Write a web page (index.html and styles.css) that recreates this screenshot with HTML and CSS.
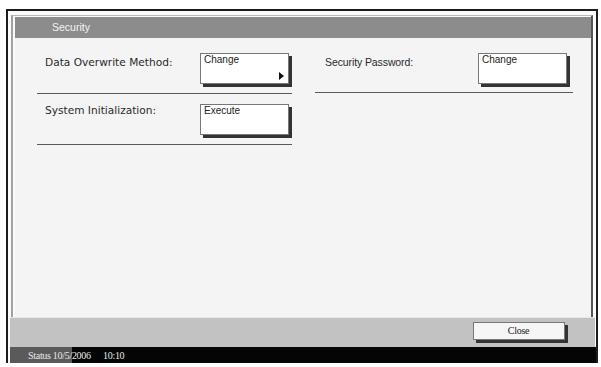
FILE: index.html
```html
<!DOCTYPE html>
<html lang="en">
<head>
    <meta charset="UTF-8">
    <title>Security</title>
    <link rel="stylesheet" href="styles.css">
</head>
<body>
    <div class="frame">
      <div class="window">
        <div class="title-bar">Security</div>
        <div class="content">
          <div class="column">
            <div class="row">
              <span class="label">Data Overwrite Method:</span>
              <div class="key">
                <span>Change</span>
                <svg class="arrow" width="5" height="8" viewBox="0 0 5 8"><path d="M0 0 L5 4 L0 8 Z" fill="#111"/></svg>
              </div>
            </div>
            <div class="row">
              <span class="label">System Initialization:</span>
              <div class="key"><span>Execute</span></div>
            </div>
          </div>
          <div class="column column-right">
            <div class="row">
              <span class="label">Security Password:</span>
              <div class="key"><span>Change</span></div>
            </div>
          </div>
        </div>
      </div>
      <div class="footer">
        <div class="key key-close">Close</div>
      </div>
      <div class="status">
        <span class="status-tab">Status 10/5/2006</span>
        <span class="status-time">10:10</span>
      </div>
    </div>
</body>
</html>
```

FILE: styles.css
```css
body {
  margin: 0;
  background: #ffffff;
  font-family: "Liberation Sans", Arial, sans-serif;
  color: #222;
}

.frame {
  margin: 9px 0 0 6px;
  width: 592px;
  height: 354px;
  box-sizing: border-box;
  border: 2px solid #1c1c1c;
  border-bottom: none;
  padding: 4px 0 0 0;
  background: #fbfbfb;
  display: flex;
  flex-direction: column;
}

/* main window */
.window {
  flex: 1;
  margin: 0 3px 0 3px;
  border-left: 2px solid #a2a2a2;
  border-top: 1px solid #b8b8b8;
  border-right: 2px solid #555;
  display: flex;
  flex-direction: column;
  min-height: 0;
}

.title-bar {
  margin: 1px 0 0 2px;
  height: 21px;
  background: #8c8c8c;
  color: #f4f4f4;
  font-size: 10.5px;
  line-height: 21px;
  padding-left: 37px;
}

.content {
  flex: 1;
  margin-left: 2px;
  background: #f4f4f4;
  display: flex;
  padding: 15px 0 0 22px;
  gap: 23px;
}

.column {
  width: 255px;
  display: flex;
  flex-direction: column;
}
.column-right {
  width: 258px;
}
.column-right .row {
  padding-left: 10px;
  padding-right: 3px;
  padding-bottom: 8px;
}

.row {
  display: flex;
  justify-content: space-between;
  align-items: flex-start;
  padding: 0 0 9px 8px;
  border-bottom: 1px solid #5a5a5a;
}
.row + .row {
  padding-top: 10px;
}

.label {
  font-family: "DejaVu Sans", Verdana, sans-serif;
  font-size: 10.6px;
  color: #2a2a2a;
  padding-top: 3px;
}
.row + .row .label {
  padding-top: 0;
}
.column-right .label {
  font-family: "Liberation Sans", Arial, sans-serif;
  font-size: 10.5px;
  letter-spacing: -0.1px;
}

/* buttons */
.key {
  width: 89px;
  height: 31px;
  margin-right: 3px;
  box-sizing: border-box;
  background: #fff;
  border: 1px solid #777;
  box-shadow: 3px 3px 0 #333;
  padding: 0 4px 0 3px;
  font-size: 10px;
  line-height: 12px;
  display: flex;
  flex-direction: column;
}
.arrow {
  align-self: flex-end;
  margin-top: 6px;
}

.footer {
  height: 30px;
  margin: 0 1px 0 2px;
  background: #c2c2c2;
  border-top: 1px solid #e6e6e6;
  box-sizing: border-box;
  display: flex;
  justify-content: flex-end;
  padding: 4px 30px 0 0;
}
.key-close {
  width: 92px;
  height: 18px;
  margin-right: 0;
  align-items: center;
  justify-content: center;
  line-height: 16px;
  background: #f6f6f6;
  font-family: "Liberation Serif", "Times New Roman", serif;
  font-size: 10px;
  letter-spacing: -0.3px;
}

.status {
  height: 16px;
  margin-left: 2px;
  background: #050505;
  display: flex;
  align-items: center;
  font-family: "Liberation Serif", "Times New Roman", serif;
  font-size: 10px;
  color: #e8e8e8;
  letter-spacing: -0.3px;
}
.status-tab {
  align-self: stretch;
  display: flex;
  align-items: center;
  background: #5a5a5a;
  padding-left: 18px;
  width: 62px;
  box-sizing: border-box;
  white-space: nowrap;
  overflow: visible;
}
.status-time {
  margin-left: 31px;
}
```
